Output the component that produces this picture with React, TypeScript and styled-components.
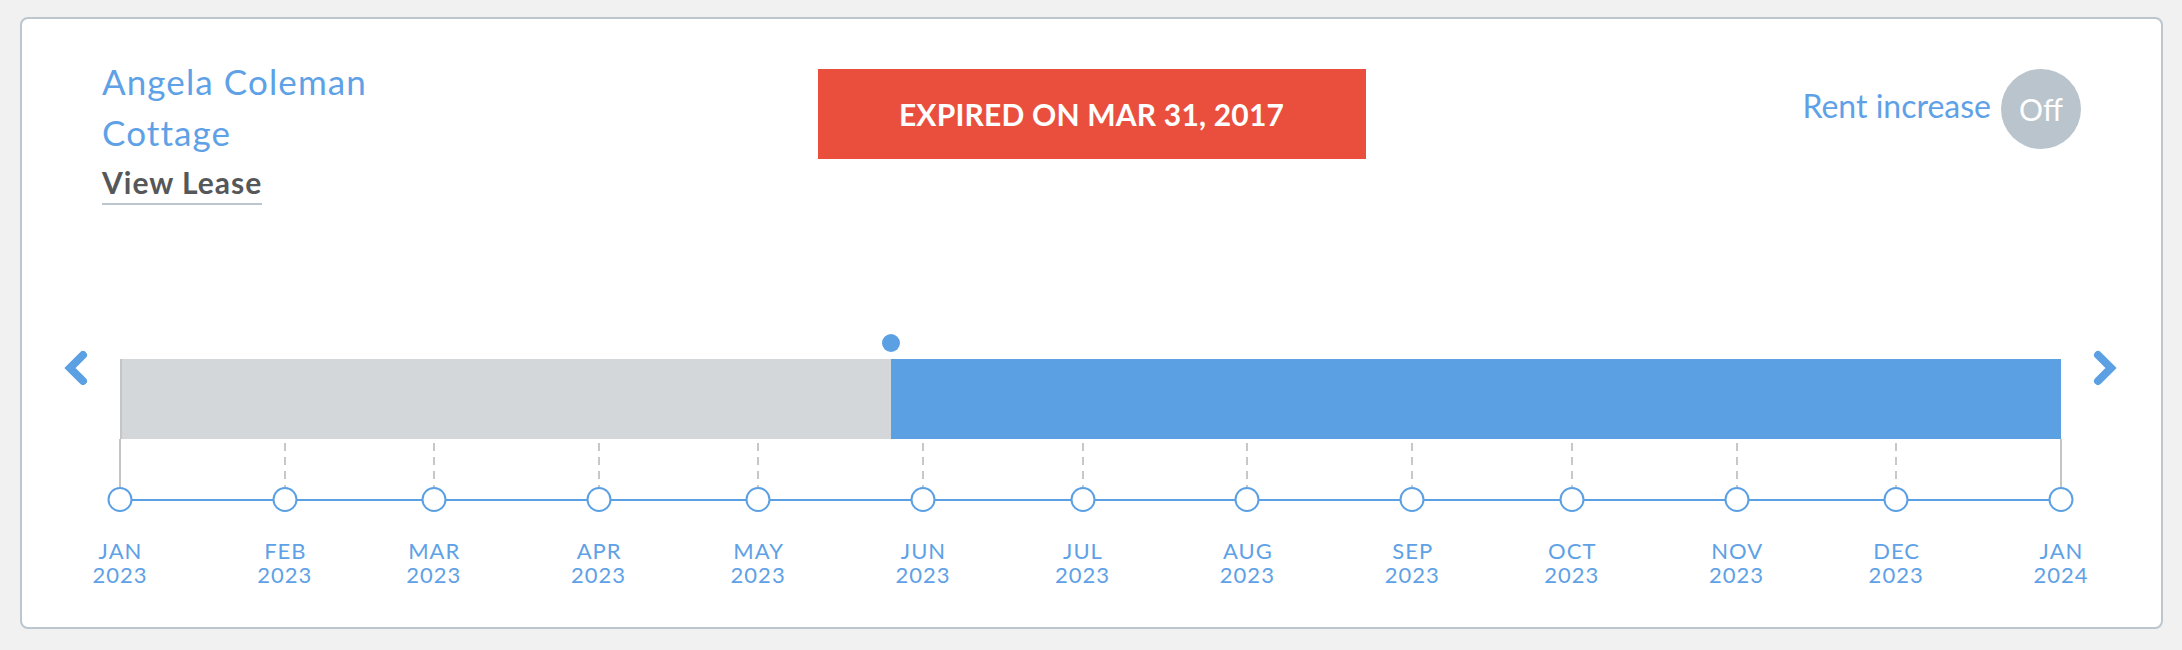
import React from "react";
import styled, { createGlobalStyle } from "styled-components";

const GlobalStyle = createGlobalStyle`
  html, body { margin: 0; padding: 0; background: #f1f1f1; }
  body { font-family: Lato, "Open Sans", "Liberation Sans", sans-serif; }
  * { box-sizing: border-box; }
`;

const BLUE = "#5ca0e4";
const TEXT_BLUE = "#5ea1e6";

const Page = styled.div`
  padding: 17px 19px 21px 20px;
`;

const Card = styled.section`
  height: 612px;
  background: #fff;
  border: 2px solid #bcc6ce;
  border-radius: 8px;
`;

const Header = styled.header`
  display: grid;
  grid-template-columns: 1fr auto 1fr;
  align-items: start;
  padding: 37px 80px 0;
`;

const TenantBlock = styled.div`
  display: flex;
  flex-direction: column;
  align-items: flex-start;
`;

const TenantLine = styled.div`
  font-size: 35px;
  line-height: 51px;
  letter-spacing: 1.1px;
  color: ${TEXT_BLUE};
`;

const ViewLease = styled.a`
  margin-top: 6px;
  font-size: 30px;
  font-weight: 700;
  line-height: 36px;
  letter-spacing: 1px;
  color: #555759;
  padding-bottom: 3px;
  border-bottom: 2px solid #bcc6ce;
  text-decoration: none;
`;

const StatusBanner = styled.div`
  margin-top: 13px;
  width: 548px;
  height: 90px;
  background: #ea4f3d;
  color: #fff;
  display: flex;
  align-items: center;
  justify-content: center;
  font-size: 30px;
  font-weight: 700;
  letter-spacing: 0.2px;
`;

const RentControl = styled.div`
  margin-top: 13px;
  display: flex;
  justify-content: flex-end;
  align-items: center;
  gap: 10px;
`;

const RentLabel = styled.span`
  font-size: 32px;
  line-height: 38px;
  padding-bottom: 6px;
  color: ${TEXT_BLUE};
`;

const Toggle = styled.button`
  width: 80px;
  height: 80px;
  border-radius: 50%;
  border: 0;
  padding: 0;
  background: #bac4cc;
  color: #fff;
  font-family: inherit;
  font-size: 30px;
  line-height: 36px;
  cursor: pointer;
`;

const Timeline = styled.div`
  margin-top: 129px;
  display: flex;
  gap: 32px;
  padding: 0 44px 0 42px;
`;

const NavButton = styled.button`
  align-self: flex-start;
  margin-top: 16px;
  width: 24px;
  height: 36px;
  padding: 0;
  border: 0;
  background: none;
  cursor: pointer;
  display: block;
  svg { display: block; }
`;

const Track = styled.div`
  flex: 1;
  display: flex;
  flex-direction: column;
`;

const MarkerRow = styled.div`
  position: relative;
  height: 18px;
`;

const Marker = styled.span`
  position: absolute;
  top: 0;
  width: 18px;
  height: 18px;
  border-radius: 50%;
  background: ${BLUE};
  transform: translateX(-50%);
`;

const Bar = styled.div`
  margin-top: 7px;
  height: 80px;
  display: flex;
`;

const Elapsed = styled.div`
  background: #d4d7da;
  border-left: 2px solid #c3c6c9;
`;

const Remaining = styled.div`
  flex: 1;
  background: ${BLUE};
`;

const TickRow = styled.div`
  position: relative;
  height: 48px;
`;

const Tick = styled.span<{ $edge: boolean }>`
  position: absolute;
  top: ${(p) => (p.$edge ? "0" : "4px")};
  bottom: 0;
  width: 2px;
  transform: translateX(-50%);
  background: ${(p) =>
    p.$edge
      ? "#c4c4c4"
      : "repeating-linear-gradient(to bottom, #c8c8c8 0 8px, transparent 8px 14px)"};
`;

const Axis = styled.div`
  position: relative;
  height: 25px;
  &::before {
    content: "";
    position: absolute;
    left: 0;
    right: 0;
    top: 11.5px;
    height: 2px;
    background: ${BLUE};
  }
`;

const Node = styled.span`
  position: absolute;
  top: 0;
  width: 25px;
  height: 25px;
  border-radius: 50%;
  border: 2px solid ${BLUE};
  background: #fff;
  transform: translateX(-50%);
`;

const LabelRow = styled.div`
  position: relative;
  margin-top: 27px;
  height: 48px;
`;

const MonthLabel = styled.div`
  position: absolute;
  top: 0;
  transform: translateX(-50%);
  text-align: center;
  white-space: nowrap;
  font-size: 22px;
  line-height: 24px;
  letter-spacing: 1px;
  text-indent: 1px;
  color: ${TEXT_BLUE};
`;

const months = [
  { m: "JAN", y: "2023", d: 31 },
  { m: "FEB", y: "2023", d: 28 },
  { m: "MAR", y: "2023", d: 31 },
  { m: "APR", y: "2023", d: 30 },
  { m: "MAY", y: "2023", d: 31 },
  { m: "JUN", y: "2023", d: 30 },
  { m: "JUL", y: "2023", d: 31 },
  { m: "AUG", y: "2023", d: 31 },
  { m: "SEP", y: "2023", d: 30 },
  { m: "OCT", y: "2023", d: 31 },
  { m: "NOV", y: "2023", d: 30 },
  { m: "DEC", y: "2023", d: 31 },
  { m: "JAN", y: "2024", d: 0 },
];

const total = 365;
let acc = 0;
const ticks = months.map((mo) => {
  const pos = (acc / total) * 100;
  acc += mo.d;
  return { ...mo, pos };
});

const markerPct = (771 / 1941) * 100;

const Chevron = ({ dir }: { dir: "left" | "right" }) => (
  <svg width="24" height="36" viewBox="0 0 24 36">
    <polyline
      points={dir === "left" ? "19,5 6,18 19,31" : "5,5 18,18 5,31"}
      fill="none"
      stroke={BLUE}
      strokeWidth="8"
      strokeLinecap="round"
      strokeLinejoin="miter"
    />
  </svg>
);

export default function App() {
  return (
    <>
      <GlobalStyle />
      <Page>
        <Card>
          <Header>
            <TenantBlock>
              <TenantLine>Angela Coleman</TenantLine>
              <TenantLine>Cottage</TenantLine>
              <ViewLease href="#">View Lease</ViewLease>
            </TenantBlock>
            <StatusBanner>EXPIRED ON MAR 31, 2017</StatusBanner>
            <RentControl>
              <RentLabel>Rent increase</RentLabel>
              <Toggle>Off</Toggle>
            </RentControl>
          </Header>
          <Timeline>
            <NavButton aria-label="Previous">
              <Chevron dir="left" />
            </NavButton>
            <Track>
              <MarkerRow>
                <Marker style={{ left: `${markerPct}%` }} />
              </MarkerRow>
              <Bar>
                <Elapsed style={{ width: `${markerPct}%` }} />
                <Remaining />
              </Bar>
              <TickRow>
                {ticks.map((t, i) => (
                  <Tick
                    key={i}
                    $edge={i === 0 || i === ticks.length - 1}
                    style={{ left: `${t.pos}%` }}
                  />
                ))}
              </TickRow>
              <Axis>
                {ticks.map((t, i) => (
                  <Node key={i} style={{ left: `${t.pos}%` }} />
                ))}
              </Axis>
              <LabelRow>
                {ticks.map((t, i) => (
                  <MonthLabel key={i} style={{ left: `${t.pos}%` }}>
                    {t.m}
                    <br />
                    {t.y}
                  </MonthLabel>
                ))}
              </LabelRow>
            </Track>
            <NavButton aria-label="Next">
              <Chevron dir="right" />
            </NavButton>
          </Timeline>
        </Card>
      </Page>
    </>
  );
}
